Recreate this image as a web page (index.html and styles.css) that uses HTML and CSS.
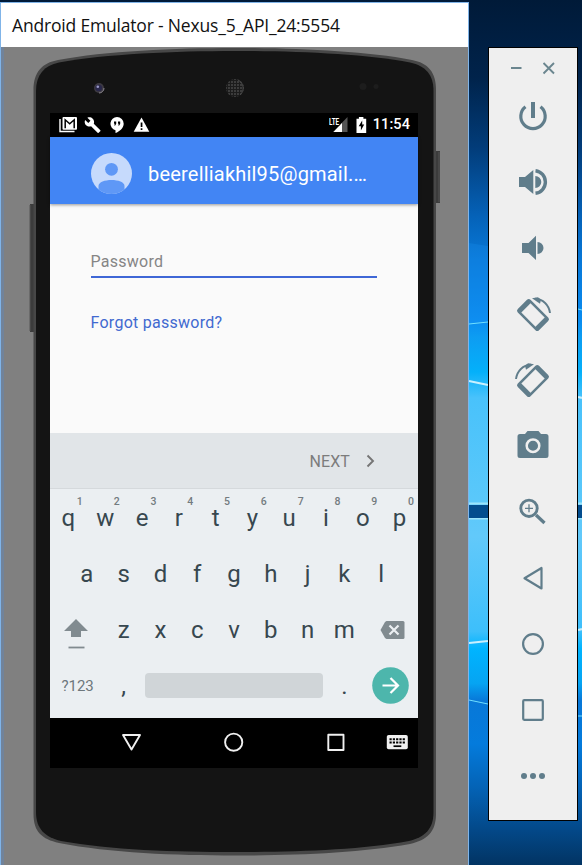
FILE: index.html
```html
<!DOCTYPE html>
<html lang="en">
<head>
<meta charset="utf-8">
<title>Android Emulator</title>
<link rel="stylesheet" href="styles.css">
</head>
<body>
<div class="desktop">
  <svg class="wallpaper" viewBox="0 0 582 865" aria-hidden="true">
    <defs>
      <linearGradient id="sky" x1="0" y1="0" x2="0" y2="865" gradientUnits="userSpaceOnUse">
        <stop offset="0" stop-color="#001a38"/><stop offset=".09" stop-color="#00234b"/>
        <stop offset=".17" stop-color="#023c79"/><stop offset=".25" stop-color="#0562b8"/>
        <stop offset=".3" stop-color="#0878d8"/><stop offset=".37" stop-color="#0a8cf0"/>
        <stop offset=".39" stop-color="#0d9df2"/><stop offset=".43" stop-color="#04b0fa"/>
        <stop offset=".46" stop-color="#49c2fb"/><stop offset=".58" stop-color="#5ac8fa"/>
        <stop offset=".62" stop-color="#62c9fa"/><stop offset=".73" stop-color="#3dbffb"/>
        <stop offset=".75" stop-color="#00b4ff"/><stop offset=".79" stop-color="#06a4f2"/>
        <stop offset=".81" stop-color="#0878d8"/><stop offset=".86" stop-color="#047bdc"/>
        <stop offset=".91" stop-color="#0463b6"/><stop offset=".96" stop-color="#034888"/>
        <stop offset="1" stop-color="#023463"/>
      </linearGradient>
    </defs>
    <rect width="582" height="865" fill="url(#sky)"/>
    <path d="M469 243l19 3v75l-19 4z" fill="#1a94f5" opacity=".25"/>
    <path d="M469 324l19-2M578 309l4 1M469 700l19 4M578 716h4" stroke="#6fe0ff" stroke-width="1"/>
    <path d="M469 381l19 4M578 397l4 1M469 643l19-2M578 630l4-1" stroke="#c8f0ff" stroke-width="2.2"/>
    <path d="M469 503.500H582M469 518.500H582" stroke="#9ce4fb" stroke-width="2"/>
    <rect x="469" y="505" width="113" height="13" fill="#034d8e"/>
  </svg>

  <main class="window">
    <header class="titlebar">Android Emulator - Nexus_5_API_24:5554</header>
    <div class="device">
      <svg class="shell" viewBox="0 47 468 818" aria-hidden="true">
        <defs><pattern id="mesh" width="3" height="3" patternUnits="userSpaceOnUse"><rect width="3" height="3" fill="#1c1c1c"/><circle cx="1" cy="1" r=".95" fill="#4a4a4a"/></pattern></defs>
        <path d="M34 204h-4v128h4zM435 151h5v52h-5z" fill="#3c3c3c"/>
        <path d="M30 205v126M439 152v50" stroke="#555" fill="none"/>
        <path d="M33.500 90C33.500 72 42 63 58 60C105 51 175 48 235 48S365 51 412 60C428 63 436 72 436 90V814C436 832 427 840 410 844C360 853 295 855.500 235 855.500S110 853 59 843C42 839 33.500 832 33.500 814Z" fill="#474747"/>
        <path d="M36 91C36 75 44 65.500 59 62.500C105 54 175 51 235 51S365 54 410 62.500C426 66 433.500 75 433.500 91V812C433.500 829 425 837 409 841C360 850 295 852 235 852S110 850 61 841C45 837 36 829 36 812Z" fill="#141414"/>
        <circle cx="99" cy="88" r="5" fill="#3d3a42"/><circle cx="98.700" cy="88" r="3.300" fill="#29274a"/><circle cx="97.800" cy="86.800" r="1.300" fill="#9b9ac8"/><path d="M99 93a5 5 0 0 0 5-5" stroke="#8b8790" fill="none"/>
        <circle cx="235" cy="88" r="9" fill="url(#mesh)"/><path d="M238 80a9 9 0 0 1 2 15" stroke="#484848" fill="none"/>
        <circle cx="363" cy="86.500" r="3.500" fill="#1d1d1d"/><circle cx="376" cy="86.500" r="2.500" fill="#1d1d1d"/>
      </svg>

      <div class="screen">
        <div class="statusbar">
          <svg width="92" height="20" viewBox="59 115 92 20" aria-hidden="true">
            <path d="M60 119v12.500h14.500" fill="none" stroke="#fff" stroke-width="1.400"/>
            <rect x="62.500" y="117" width="14.500" height="12.700" rx="1" fill="#fff"/>
            <path d="M65.200 128.200v-8.400l4.500 3.900 4.500-3.900v8.400" fill="none" stroke="#000" stroke-width="1.500"/>
            <path transform="translate(84 116.500) scale(.72)" fill="#fff" d="M22.700 19l-9.100-9.100c.9-2.300.4-5-1.500-6.900-2-2-5-2.400-7.400-1.300L9 6 6 9 1.600 4.700C.4 7.100.9 10.100 2.900 12.100c1.900 1.900 4.600 2.400 6.900 1.500l9.100 9.100c.4.4 1 .4 1.400 0l2.300-2.300c.5-.4.5-1.100.1-1.400z"/>
            <path d="M117 117a6.700 6.700 0 0 0-1.500 13.200V133c4-1.500 8.200-5 8.200-9.300A6.700 6.700 0 0 0 117 117z" fill="#fff"/>
            <path d="M114 121.500h2.200v2.300l-1 1.700h-1l.6-1.700H114zM118 121.500h2.200v2.300l-1 1.700h-1l.6-1.700H118z" fill="#000"/>
            <path d="M141.500 117.500l7.800 14.200h-15.600z" fill="#fff"/><path d="M140.700 122.500h1.700v4.500h-1.700zM140.700 128.300h1.700v1.700h-1.700z" fill="#000"/>
          </svg>
          <div class="status-right">
            <span class="network">LTE</span>
            <svg width="34" height="20" viewBox="333 115 34 20" aria-hidden="true">
              <path d="M347.500 117v15H333z" fill="#555"/><path d="M342 123v9h-8.500z" fill="#fff"/><path d="M333 116h6.500v9.500H333z" fill="#000"/>
              <path d="M358.900 117h4.500v1.700h2.800V133h-9.700v-14.300h2.400z" fill="#fff"/><path d="M362.200 120.500l-3.500 5.700h2.200v4.300l3.300-6h-2z" fill="#000"/>
            </svg>
            <time class="clock">11:54</time>
          </div>
        </div>

        <div class="account">
          <svg class="avatar" viewBox="0 0 41 41" aria-hidden="true">
            <defs><clipPath id="face"><circle cx="20.500" cy="20.500" r="20.500"/></clipPath></defs>
            <g clip-path="url(#face)"><rect width="41" height="41" fill="#c6dafc"/><circle cx="20.500" cy="16.300" r="6.400" fill="#5f98f6"/><path d="M7.500 41v-8c0-8 26-8 26 0v8z" fill="#5f98f6"/></g>
          </svg>
          <span class="email">beerelliakhil95@gmail.…</span>
        </div>

        <section class="form">
          <div class="password">Password</div>
          <a class="forgot">Forgot password?</a>
        </section>

        <div class="nextbar">
          <span>NEXT</span>
          <svg width="9" height="14" viewBox="0 0 9 14" aria-hidden="true"><path d="M1.500 1.500L7 7l-5.500 5.500" fill="none" stroke="#757575" stroke-width="1.900"/></svg>
        </div>

        <div class="keyboard">
          <div class="keys">
            <span class="key">q<sup>1</sup></span><span class="key">w<sup>2</sup></span><span class="key">e<sup>3</sup></span><span class="key">r<sup>4</sup></span><span class="key">t<sup>5</sup></span><span class="key">y<sup>6</sup></span><span class="key">u<sup>7</sup></span><span class="key">i<sup>8</sup></span><span class="key">o<sup>9</sup></span><span class="key">p<sup>0</sup></span>
          </div>
          <div class="keys">
            <span class="key">a</span><span class="key">s</span><span class="key">d</span><span class="key">f</span><span class="key">g</span><span class="key">h</span><span class="key">j</span><span class="key">k</span><span class="key">l</span>
          </div>
          <div class="keys">
            <span class="key wide shift"><svg width="26" height="32" viewBox="0 0 26 32" aria-hidden="true"><path d="M13 1l12 12h-7v6H8v-6H1z" fill="#818b90"/><path d="M5.500 29.500h16" stroke="#818b90" stroke-width="1.800"/></svg></span>
            <span class="key">z</span><span class="key">x</span><span class="key">c</span><span class="key">v</span><span class="key">b</span><span class="key">n</span><span class="key">m</span>
            <span class="key wide delete"><svg width="25" height="18" viewBox="0 0 25 18" aria-hidden="true"><path d="M6.500 0H23a1.500 1.500 0 0 1 1.500 1.500v15A1.500 1.500 0 0 1 23 18H6.500L5 17 .5 9 5 1z" fill="#818b90"/><path d="M9.500 4.500l9 9M18.500 4.500l-9 9" stroke="#ebeff2" stroke-width="2.200"/></svg></span>
          </div>
          <div class="keys">
            <span class="key wide symbols">?123</span><span class="key">,</span><span class="space"></span><span class="key dot">.</span>
            <span class="key wide go"><svg width="37" height="37" viewBox="0 0 37 37" aria-hidden="true"><circle cx="18.500" cy="18.500" r="18.300" fill="#4db6ac"/><path d="M10.500 18.500h15M18.500 11l7.500 7.500-7.500 7.500" fill="none" stroke="#fff" stroke-width="2.200"/></svg></span>
          </div>
        </div>

        <svg class="navbar" viewBox="50 718 368 50" aria-hidden="true">
          <g fill="none" stroke="#f0f0f0" stroke-width="1.900" stroke-linejoin="round"><path d="M123 735h17l-8.500 14.500z"/><circle cx="233.700" cy="742.200" r="8.600"/><rect x="328.300" y="734.800" width="15.200" height="15.200"/></g>
          <rect x="386.800" y="735" width="21" height="14.300" rx="1.800" fill="#f0f0f0"/>
          <path d="M389.500 739.300h15.500M389.500 742.500h15.500" stroke="#000" stroke-width="2" stroke-dasharray="2.200 1.100"/><path d="M393.500 746.200h7.800" stroke="#000" stroke-width="1.700"/>
        </svg>
      </div>
    </div>
  </main>

  <aside class="toolbar">
    <div class="controls">
      <svg width="46" height="14" viewBox="510 61 46 14" aria-hidden="true"><path d="M511 68h10.500M543.500 63l10.500 10.500M554 63l-10.500 10.500" stroke="#6b868f" stroke-width="1.900" fill="none"/></svg>
    </div>
    <div class="tool"><svg viewBox="-22 -22 44 44" aria-hidden="true"><path d="M-7.500-9.200A12.200 12.200 0 1 0 7.500-9.200" fill="none" stroke="#607d8b" stroke-width="3.200"/><path d="M0-14V2" stroke="#607d8b" stroke-width="4"/></svg></div>
    <div class="tool"><svg viewBox="-22 -22 44 44" aria-hidden="true"><path d="M-14-5h6L.3-12V12L-8 5h-6zM2.300-6a6 6 0 0 1 0 12z" fill="#607d8b"/><path d="M2.500-11.300a11.400 11.400 0 0 1 0 22.600" fill="none" stroke="#607d8b" stroke-width="3.400"/></svg></div>
    <div class="tool"><svg viewBox="-22 -22 44 44" aria-hidden="true"><path d="M-11-5h6.500L3-12.300V12L-4.500 5H-11zM4.500-6a6 6 0 0 1 0 12z" fill="#607d8b"/></svg></div>
    <div class="tool"><svg viewBox="-22 -22 44 44" aria-hidden="true"><g id="rotate"><g transform="translate(0 1) rotate(45)"><rect x="-15" y="-9" width="30" height="18" rx="2.500" fill="#607d8b"/><rect x="-10" y="-6.500" width="20" height="13" fill="#efefef"/></g><path d="M2-15.200C10-15 16-9 17-1" fill="none" stroke="#607d8b" stroke-width="1.900"/><path d="M-1-15.700l6-1 3 2.500-1 4z" fill="#607d8b"/></g></svg></div>
    <div class="tool"><svg viewBox="-22 -22 44 44" aria-hidden="true"><use href="#rotate" transform="scale(-1 1)"/></svg></div>
    <div class="tool"><svg viewBox="-22 -23 44 44" aria-hidden="true"><g transform="translate(0 -2)"><path d="M-5.500-14h11l2.500 3h5a2.500 2.500 0 0 1 2.500 2.500v19A2.500 2.500 0 0 1 13 13h-26a2.500 2.500 0 0 1-2.500-2.500v-19A2.500 2.500 0 0 1-13-11h5z" fill="#607d8b"/><circle cy=".7" r="6.300" fill="none" stroke="#efefef" stroke-width="2.500"/></g></svg></div>
    <div class="tool"><svg viewBox="-22 -21 44 44" aria-hidden="true"><g fill="none" stroke="#607d8b"><circle cx="-4" cy="-2.700" r="8.200" stroke-width="2.900"/><path d="M-8-2.700h8M-4-6.700v8" stroke-width="1.300"/><path d="M3 4l8.500 8" stroke-width="3.300"/></g></svg></div>
    <div class="tool"><svg viewBox="-22 -22 44 44" aria-hidden="true"><path d="M8.500-10v20.500L-8.500.2z" fill="none" stroke="#607d8b" stroke-width="2.200" stroke-linejoin="round"/></svg></div>
    <div class="tool"><svg viewBox="-22 -22 44 44" aria-hidden="true"><circle r="9.900" fill="none" stroke="#607d8b" stroke-width="2.200"/></svg></div>
    <div class="tool"><svg viewBox="-22 -22 44 44" aria-hidden="true"><rect x="-9.800" y="-9.800" width="19.600" height="19.600" rx="1" fill="none" stroke="#607d8b" stroke-width="2.200"/></svg></div>
    <div class="tool"><svg viewBox="-22 -22 44 44" aria-hidden="true"><g fill="#607d8b"><circle cx="-9" r="3"/><circle r="3"/><circle cx="9" r="3"/></g></svg></div>
  </aside>
</div>
</body>
</html>
```
FILE: styles.css
```css
* { box-sizing: border-box; }
body { margin: 0; overflow: hidden; }
svg { display: block; flex: none; }

.desktop {
  position: relative;
  display: flex;
  align-items: flex-start;
  gap: 19px;
  width: 582px;
  height: 865px;
  padding-top: 2px;
  overflow: hidden;
  font-family: Roboto, sans-serif;
}
.wallpaper { position: absolute; inset: 0; width: 582px; height: 865px; }

.window {
  position: relative;
  width: 469px;
  height: 863px;
  border: 1px solid #80b4e8;
  border-bottom: 0;
  background: #808080;
}
.titlebar {
  height: 44px;
  padding-left: 11px;
  background: #fff;
  color: #111;
  font: 17.5px/45px "Open Sans", sans-serif;
  letter-spacing: -0.18px;
  white-space: nowrap;
}
.device {
  position: relative;
  height: 818px;
  padding: 66px 0 0 49px;
  box-shadow: inset 3px 0 #71839a;
}
.shell { position: absolute; top: 0; left: -1px; width: 468px; height: 818px; }

.screen { position: relative; width: 368px; background: #fafafa; }
.statusbar {
  display: flex;
  align-items: center;
  justify-content: space-between;
  height: 24px;
  padding: 0 8px 0 9px;
  background: #000;
  color: #fff;
}
.status-right { display: flex; align-items: center; }
.network {
  position: relative;
  z-index: 1;
  width: 11px;
  margin: -7px -7px 0 0;
  font: 700 9px/10px "Roboto", sans-serif;
  transform: scaleX(.7);
  transform-origin: 0 0;
}
.clock { margin-left: 6px; font-size: 14.5px; font-weight: 500; line-height: 24px; letter-spacing: .1px; }

.account {
  position: relative;
  display: flex;
  align-items: center;
  gap: 16.5px;
  height: 67px;
  padding: 6px 0 0 40.5px;
  background: #4285f4;
  box-shadow: 0 1px 3px rgba(0, 0, 0, .4);
}
.avatar { width: 41px; height: 41px; }
.email { color: #fff; font-size: 20px; letter-spacing: .2px; white-space: nowrap; }

.form { height: 229px; padding: 45px 41px 0 40.5px; font-size: 16px; letter-spacing: .27px; }
.password { height: 29px; border-bottom: 2px solid #3f67d6; color: #858585; line-height: 25px; }
.forgot { display: block; margin-top: 33px; color: #4169d0; line-height: 24px; }

.nextbar {
  display: flex;
  align-items: center;
  justify-content: flex-end;
  gap: 16px;
  height: 56px;
  padding: 1px 43px 0 0;
  border-bottom: 1px solid #d5d9dc;
  background: #e1e5e8;
  color: #7c7c7c;
  font-size: 16px;
  letter-spacing: .1px;
}

.keyboard { height: 229px; padding-top: 1px; background: #ebeff2; color: #37474f; }
.keys { display: flex; justify-content: center; height: 56px; }
.key {
  position: relative;
  display: flex;
  align-items: center;
  justify-content: center;
  width: 36.8px;
  font-size: 24px;
}
.key sup {
  position: absolute;
  top: 6px;
  right: 4px;
  color: #737b80;
  font-size: 10.5px;
  font-weight: 500;
  line-height: 12px;
}
.wide { width: 55.2px; }
.shift { padding: 8px 4px 0 0; }
.delete { padding-left: 4px; }
.symbols { color: #6d777c; font-size: 15px; }
.space { width: 178px; height: 25px; margin: 15px 3px 0; border-radius: 4px; background: #d0d5d8; }
.go { padding: 0 0 2px 1px; }
.navbar { width: 368px; height: 50px; background: #000; }

.toolbar {
  position: relative;
  width: 90px;
  height: 774px;
  margin-top: 45px;
  border: 1px solid #000;
  background: #efefef;
}
.controls { display: flex; align-items: center; justify-content: center; height: 35px; padding-top: 5px; }
.tool { display: flex; align-items: center; justify-content: center; height: 66px; }
.tool svg { width: 44px; height: 44px; }
```
